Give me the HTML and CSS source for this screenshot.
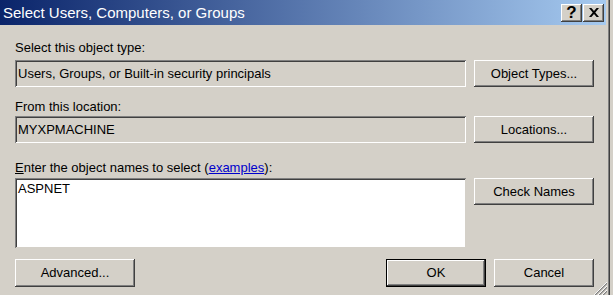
FILE: index.html
```html
<!DOCTYPE html>
<html>
<head>
<meta charset="utf-8">
<title>Select Users, Computers, or Groups</title>
<link rel="stylesheet" href="styles.css">
</head>
<body>
<div class="window">
  <div class="titlebar">
    <span class="title-text">Select Users, Computers, or Groups</span>
    <div class="title-buttons">
      <div class="tbtn help">?</div>
      <div class="tbtn close">
        <svg width="10" height="9" viewBox="0 0 10 9"><path d="M0 0h2.4l2.6 3.1 2.6-3.1H10L6.3 4.5 10 9H7.6L5 5.9 2.4 9H0l3.7-4.5z" fill="#000"/></svg>
      </div>
    </div>
  </div>
  <div class="content">
    <div class="label l1">Select this object type:</div>
    <div class="row">
      <div class="field">Users, Groups, or Built-in security principals</div>
      <div class="btn">Object Types...</div>
    </div>
    <div class="label l2">From this location:</div>
    <div class="row">
      <div class="field">MYXPMACHINE</div>
      <div class="btn">Locations...</div>
    </div>
    <div class="label l3"><u>E</u>nter the object names to select (<a class="link" href="#">examples</a>):</div>
    <div class="row">
      <div class="names">ASPNET</div>
      <div class="btn">Check Names</div>
    </div>
    <div class="bottom">
      <div class="btn">Advanced...</div>
      <div class="right-btns">
        <div class="btn small default"><span>OK</span></div>
        <div class="btn small">Cancel</div>
      </div>
    </div>
  </div>
  <svg class="grip" width="13" height="13" viewBox="0 0 13 13">
    <path d="M13 1L1 13M13 5L5 13M13 9L9 13" stroke="#808080" stroke-width="1.4"/>
    <path d="M13 0L0 13M13 4L4 13M13 8L8 13" stroke="#ffffff" stroke-width="0.9"/>
  </svg>
</div>
</body>
</html>
```

FILE: styles.css
```css
html, body {
  margin: 0;
  padding: 0;
  background: #d4d0c8;
}
body {
  width: 613px;
  height: 295px;
  overflow: hidden;
  font-family: "Liberation Sans", Arial, sans-serif;
  font-size: 13px;
  color: #000;
}
.window {
  position: relative;
  width: 610px;
  height: 295px;
  border-right: 1px solid #404040;
  box-shadow: inset -1px 0 0 #808080;
  box-sizing: border-box;
}
.titlebar {
  height: 25px;
  margin-right: 3px;
  background: linear-gradient(to right, #0a246a 0%, #a6caf0 100%);
  display: flex;
  align-items: center;
  justify-content: space-between;
  padding: 0 2px 0 3px;
}
.title-text {
  color: #fff;
  font-size: 15px;
  line-height: 25px;
  white-space: nowrap;
}
.title-buttons {
  display: flex;
  gap: 1px;
  margin-top: 1px;
}
.tbtn {
  width: 21px;
  height: 18px;
  background: #d4d0c8;
  box-shadow: inset -1px -1px 0 #404040, inset 1px 1px 0 #ffffff, inset -2px -2px 0 #808080;
  display: flex;
  align-items: center;
  justify-content: center;
  box-sizing: border-box;
}
.help {
  font-weight: bold;
  font-size: 17px;
  line-height: 18px;
  padding-bottom: 1px;
}
.close svg {
  display: block;
  margin-top: -1px;
}
.content {
  padding: 14px 0 0 15px;
  display: flex;
  flex-direction: column;
}
.label {
  line-height: 17px;
  white-space: nowrap;
}
.l1 { height: 21px; }
.l2 { height: 18px; margin-top: 11px; }
.l3 { height: 19px; margin-top: 16px; }
.link {
  color: #0000cc;
  text-decoration: underline;
}
.row {
  display: flex;
  gap: 8px;
  align-items: flex-start;
}
.field {
  width: 451px;
  height: 27px;
  box-sizing: border-box;
  padding: 0 3px 1px;
  display: flex;
  align-items: center;
  box-shadow: inset 1px 1px 0 #808080, inset -1px -1px 0 #ffffff, inset 2px 2px 0 #404040, inset -2px -2px 0 #d4d0c8;
}
.names {
  width: 451px;
  height: 70px;
  box-sizing: border-box;
  padding: 3px 3px;
  line-height: 15px;
  background: #fff;
  box-shadow: inset 1px 1px 0 #808080, inset -1px -1px 0 #d4d0c8, inset 2px 2px 0 #404040, inset -2px -2px 0 #ffffff;
}
.btn {
  width: 120px;
  height: 27px;
  box-sizing: border-box;
  display: flex;
  align-items: center;
  justify-content: center;
  background: #d4d0c8;
  box-shadow: inset -1px -1px 0 #404040, inset 1px 1px 0 #ffffff, inset -2px -2px 0 #808080;
  padding-bottom: 1px;
  white-space: nowrap;
}
.bottom {
  margin-top: 11px;
  width: 579px;
  display: flex;
  justify-content: space-between;
}
.bottom .btn {
  height: 28px;
}
.right-btns {
  display: flex;
  gap: 8px;
}
.btn.small {
  width: 100px;
}
.btn.default {
  border: 1px solid #000;
  box-shadow: inset -1px -1px 0 #404040, inset 1px 1px 0 #ffffff, inset -2px -2px 0 #808080;
}
.grip {
  position: absolute;
  right: 2px;
  bottom: 0;
  display: block;
}
```
